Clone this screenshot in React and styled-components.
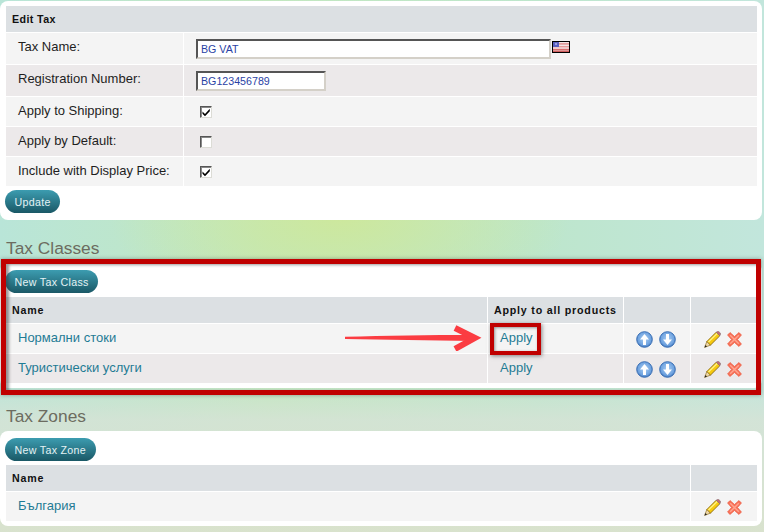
import React from 'react';
import styled, { createGlobalStyle } from 'styled-components';

const GlobalStyle = createGlobalStyle`
	html, body {
		margin: 0;
		padding: 0;
	}

	body {
		font-family: "Liberation Sans", Arial, sans-serif;
		font-size: 13px;
		color: #222;
	}
`;

function UpIcon({ down }) {
	const id = down ? 'blueDown' : 'blueUp';

	return (
		<CircleSvg viewBox="0 0 17 17">
			<defs>
				<radialGradient id={id} cx="50%" cy="45%" r="60%">
					<stop offset="0%" stopColor="#a9cdf3" />
					<stop offset="70%" stopColor="#6ea2df" />
					<stop offset="100%" stopColor="#2f65ad" />
				</radialGradient>
			</defs>
			<circle cx="8.5" cy="8.5" r="7.8" fill={`url(#${id})`} stroke="#3a6fb5" />
			<path
				d={down ? 'M7 3h3v5.5h3L8.5 14 4 8.5h3z' : 'M7 14h3V8.5h3L8.5 3 4 8.5h3z'}
				fill="#fff"
			/>
		</CircleSvg>
	);
}

function PencilIcon() {
	return (
		<PencilSvg viewBox="0 0 17 17">
			<path d="M2.8 10.6 12.2 1.2l3.6 3.6L6.4 14.2z" fill="#f6c90f" stroke="#7d5c08" strokeWidth=".8" />
			<path d="M4.4 11 13.2 2.4" stroke="#fff27e" strokeWidth="1.4" />
			<path d="M12.2 1.2 13.4.3c.5-.3 1-.2 1.4.2l1.7 1.7c.4.4.4 1 .1 1.4l-.8 1.2z" fill="#c56a72" stroke="#808080" strokeWidth=".6" />
			<path d="M2.8 10.6.6 16.4l5.8-2.2z" fill="#f0d9a8" stroke="#7d5c08" strokeWidth=".6" />
			<path d="M1.5 14 .6 16.4 3 15.5z" fill="#222" />
		</PencilSvg>
	);
}

function RemoveIcon() {
	return (
		<RemoveSvg viewBox="0 0 15 15">
			<path
				d="M3 .6 7.5 4.6 12 .6 14.4 3l-4 4.5 4 4.5-2.4 2.4-4.5-4-4.5 4L.6 12l4-4.5-4-4.5z"
				fill="#f8735a"
				stroke="#ee5a40"
				strokeWidth=".8"
			/>
			<path d="M3.2 3.2 11.8 11.8M11.8 3.2 3.2 11.8" stroke="#ffa48f" strokeWidth="1.4" fill="none" />
		</RemoveSvg>
	);
}

function UsFlag() {
	return (
		<FlagSvg viewBox="0 0 18 12">
			<rect width="18" height="12" fill="#000" />
			<rect x="1" y="1" width="16" height="10" fill="#f3e6e6" />
			<rect x="1" y="2.2" width="16" height="1.4" fill="#dc8c8c" />
			<rect x="1" y="5" width="16" height="1.4" fill="#e69a9a" />
			<rect x="1" y="7.8" width="16" height="1.4" fill="#d96c6c" />
			<rect x="1" y="9.5" width="16" height="1.5" fill="#cf5f5f" />
			<rect x="1" y="1" width="6" height="5" fill="#5a5fbf" />
			<rect x="3" y="2" width="2" height="2" fill="#9a9fe0" />
		</FlagSvg>
	);
}

function CheckBox({ checked }) {
	return (
		<CheckFrame>
			{checked && (
				<svg viewBox="0 0 10 10" width="10" height="10">
					<path d="M1.5 4.5 4 7l4.8-5.2v2.4L4 9.2 1.5 6.8z" fill="#000" />
				</svg>
			)}
		</CheckFrame>
	);
}

function RowActions({ alt, height }) {
	return (
		<ActionCell $alt={alt} $height={height}>
			<IconRow>
				<PencilIcon />
				<RemoveIcon />
			</IconRow>
		</ActionCell>
	);
}

function SortActions({ alt, height }) {
	return (
		<ActionCell $alt={alt} $height={height}>
			<IconRow>
				<UpIcon />
				<UpIcon down />
			</IconRow>
		</ActionCell>
	);
}

export default function App() {
	return (
		<Page>
			<GlobalStyle />
			<Panel $first>
				<DataTable>
					<colgroup>
						<col width="177" />
						<col />
					</colgroup>
					<thead>
						<tr>
							<HeaderCell colSpan={2} $tight>Edit Tax</HeaderCell>
						</tr>
					</thead>
					<tbody>
						<tr>
							<LabelCell $height={32}>Tax Name:</LabelCell>
							<ValueCell $height={32}>
								<FieldRow>
									<TextField $width={355} defaultValue="BG VAT" />
									<UsFlag />
								</FieldRow>
							</ValueCell>
						</tr>
						<tr>
							<LabelCell $alt $height={32}>Registration Number:</LabelCell>
							<ValueCell $alt $height={32}>
								<FieldRow>
									<TextField $width={130} defaultValue="BG123456789" />
								</FieldRow>
							</ValueCell>
						</tr>
						<tr>
							<LabelCell $short $height={30}>Apply to Shipping:</LabelCell>
							<ValueCell $height={30}><CheckBox checked /></ValueCell>
						</tr>
						<tr>
							<LabelCell $short $alt $height={30}>Apply by Default:</LabelCell>
							<ValueCell $alt $height={30}><CheckBox /></ValueCell>
						</tr>
						<tr>
							<LabelCell $short $height={30}>Include with Display Price:</LabelCell>
							<ValueCell $height={30}><CheckBox checked /></ValueCell>
						</tr>
					</tbody>
				</DataTable>
				<PillButton>Update</PillButton>
			</Panel>

			<SectionTitle>Tax Classes</SectionTitle>
			<Highlighted>
				<Panel>
					<PillButton $top>New Tax Class</PillButton>
					<DataTable>
						<thead>
							<tr>
								<HeaderCell>Name</HeaderCell>
								<HeaderCell $width={136}>Apply to all products</HeaderCell>
								<HeaderCell $width={67} />
								<HeaderCell $width={67} />
							</tr>
						</thead>
						<tbody>
							<tr>
								<LinkCell><TableLink>Нормални стоки</TableLink></LinkCell>
								<LinkCell><TableLink>Apply</TableLink></LinkCell>
								<SortActions />
								<RowActions />
							</tr>
							<tr>
								<LinkCell $alt><TableLink>Туристически услуги</TableLink></LinkCell>
								<LinkCell $alt><TableLink>Apply</TableLink></LinkCell>
								<SortActions alt />
								<RowActions alt />
							</tr>
						</tbody>
					</DataTable>
				</Panel>
				<RedFrame />
				<ApplyFrame />
				<ArrowSvg viewBox="0 0 140 26">
					<path d="M0 11.8 C40 10.6 85 10 128 10 L128 16 C85 15.4 40 14.8 0 14 Z" fill="#fb3c42" />
					<path d="M110 3 130 13 110 24" stroke="#fb3c42" strokeWidth="6" fill="none" />
				</ArrowSvg>
			</Highlighted>

			<SectionTitle>Tax Zones</SectionTitle>
			<Panel>
				<PillButton $top>New Tax Zone</PillButton>
				<DataTable>
					<thead>
						<tr>
							<HeaderCell>Name</HeaderCell>
							<HeaderCell $width={67} />
						</tr>
					</thead>
					<tbody>
						<tr>
							<LinkCell><TableLink>България</TableLink></LinkCell>
							<RowActions />
						</tr>
					</tbody>
				</DataTable>
			</Panel>
		</Page>
	);
}

const Page = styled.div`
	width: 764px;
	height: 532px;
	overflow: hidden;
	box-sizing: border-box;
	padding-top: 1px;
	background:
		linear-gradient(180deg, rgba(214, 227, 214, 0) 380px, rgba(214, 227, 214, 0.85) 420px, rgba(218, 226, 205, 0.95) 532px),
		radial-gradient(ellipse 230px 110px at 340px 215px, #cde89c 0%, rgba(205, 232, 156, 0) 100%),
		linear-gradient(90deg, #b9e5d8 0%, #c2e7bf 35%, #bde6cc 70%, #c2e6dc 100%);
`;

const Panel = styled.section`
	width: 762px;
	box-sizing: border-box;
	padding: ${({ $first }) => ($first ? '5px 5px 7px 6px' : '7px 5px 5px 6px')};
	background: #fff;
	border-radius: 8px;
`;

const SectionTitle = styled.h2`
	margin: 0;
	height: 43px;
	box-sizing: border-box;
	padding: 18px 0 0 6px;
	font-size: 17.33px;
	line-height: 20px;
	font-weight: normal;
	color: #6c6c60;
`;

const PillButton = styled.button`
	display: block;
	height: 23px;
	margin: ${({ $top }) => ($top ? '0 0 4px -1px' : '4px 0 0 -1px')};
	padding: 0 9.5px;
	border: 0;
	border-radius: 12px;
	background: linear-gradient(#3c9cb0, #1a5866);
	color: #e4f2f4;
	font-family: "Liberation Sans", Arial, sans-serif;
	font-size: 10.67px;
	letter-spacing: 0.3px;
`;

const DataTable = styled.table`
	width: 751px;
	table-layout: fixed;
	border-collapse: separate;
	border-spacing: 0;
`;

const HeaderCell = styled.th`
	width: ${({ $width }) => ($width ? `${$width}px` : 'auto')};
	height: 26px;
	box-sizing: border-box;
	padding: 0 6px;
	background: #dce0e3;
	border-left: 1px solid #fff;
	text-align: left;
	font-size: 10.67px;
	letter-spacing: ${({ $tight }) => ($tight ? '0.4px' : '0.8px')};
	color: #111;
	white-space: nowrap;

	&:first-child {
		border-left: 0;
	}
`;

const BodyCell = styled.td`
	box-sizing: border-box;
	height: ${({ $height }) => $height || 30}px;
	padding: 0;
	background: ${({ $alt }) => ($alt ? '#ece9ea' : '#f4f4f4')};
	border-top: 1px solid #fff;
	border-left: 1px solid #fff;
	vertical-align: middle;

	&:first-child {
		border-left: 0;
	}
`;

const LabelCell = styled(BodyCell)`
	padding: 0 0 ${({ $short }) => ($short ? '2px' : '4px')} 12px;
	color: #1e1e1e;
	white-space: nowrap;
`;

const ValueCell = styled(BodyCell)`
	padding-left: 12px;
`;

const LinkCell = styled(BodyCell)`
	padding: 0 0 3px 12px;
`;

const ActionCell = styled(BodyCell)``;

const TableLink = styled.a`
	color: #1f7b94;
	font-size: 13px;
	cursor: pointer;
`;

const FieldRow = styled.div`
	display: flex;
	align-items: center;
	gap: 1px;
`;

const TextField = styled.input`
	width: ${({ $width }) => $width}px;
	height: 20px;
	box-sizing: border-box;
	padding: 0 3px;
	border: 2px solid;
	border-color: #555 #d4d0c8 #d4d0c8 #555;
	background: #fff;
	color: #2a42a4;
	font-family: "Liberation Sans", Arial, sans-serif;
	font-size: 10.67px;
`;

const CheckFrame = styled.span`
	display: flex;
	align-items: center;
	justify-content: center;
	width: 12px;
	height: 12px;
	margin-left: 4px;
	box-sizing: border-box;
	background: #fff;
	border: 1px solid;
	border-color: #555 #dcdcd6 #dcdcd6 #555;
	box-shadow: inset 1px 1px 0 #888;
`;

const IconRow = styled.div`
	display: flex;
	justify-content: center;
	align-items: center;
	gap: 6px;
	padding: 1px 3px 0 0;
`;

const CircleSvg = styled.svg`
	width: 17px;
	height: 17px;
`;

const PencilSvg = styled.svg`
	width: 17px;
	height: 17px;
`;

const RemoveSvg = styled.svg`
	width: 15px;
	height: 15px;
`;

const FlagSvg = styled.svg`
	width: 18px;
	height: 12px;
	margin-bottom: 3px;
`;

const Highlighted = styled.div`
	position: relative;
`;

const RedFrame = styled.div`
	position: absolute;
	left: 1px;
	top: -4px;
	width: 760px;
	height: 136px;
	box-sizing: border-box;
	border: 5px solid #c00000;
	box-shadow: 0 0 4px rgba(60, 60, 60, 0.45), inset 3px 1px 3px rgba(60, 60, 60, 0.5);
`;

const ApplyFrame = styled.div`
	position: absolute;
	left: 490px;
	top: 60px;
	width: 51px;
	height: 32px;
	box-sizing: border-box;
	border: 4px solid #c00000;
	box-shadow: 1px 1px 4px rgba(60, 60, 60, 0.6), inset 1px 1px 3px rgba(60, 60, 60, 0.5);
`;

const ArrowSvg = styled.svg`
	position: absolute;
	left: 345px;
	top: 62px;
	width: 140px;
	height: 26px;
`;
